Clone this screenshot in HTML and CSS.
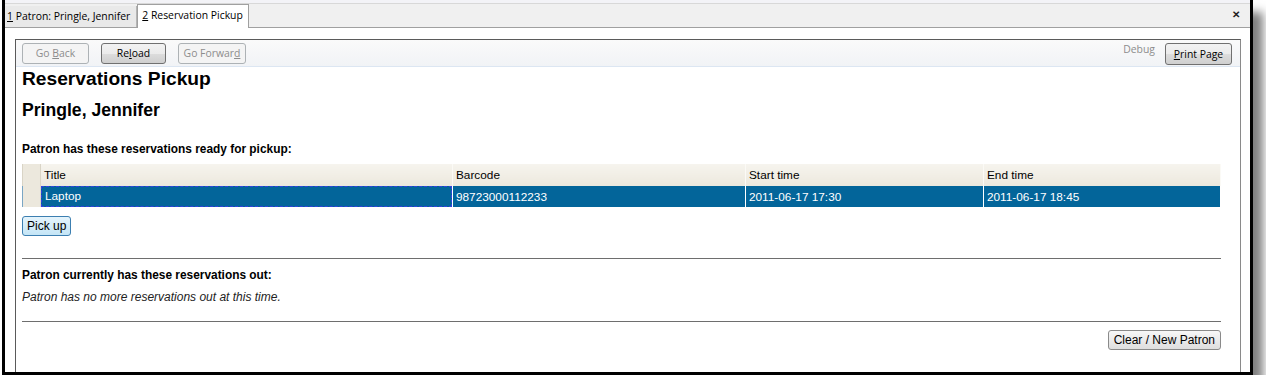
FILE: index.html
```html
<!DOCTYPE html>
<html>
<head>
    <meta charset="UTF-8">
    <title>Reservation Pickup</title>
    <link rel="stylesheet" href="styles.css">
</head>
<body>
    <div class="window">
        <div class="tab-strip">
            <div class="tab"><u>1</u> Patron: Pringle, Jennifer</div>
            <div class="tab selected"><u>2</u> Reservation Pickup</div>
            <div class="tab-spacer"></div>
            <div class="tab-close">&#x2715;</div>
        </div>
        <div class="panel">
            <div class="browser">
                <div class="toolbar">
                    <button class="nav-btn back" disabled>Go <u>B</u>ack</button>
                    <button class="nav-btn reload">Re<u>l</u>oad</button>
                    <button class="nav-btn forward" disabled>Go Forwar<u>d</u></button>
                    <div class="toolbar-spacer"></div>
                    <span class="debug">Debug</span>
                    <button class="nav-btn print"><u>P</u>rint Page</button>
                </div>
                <div class="page">
                    <h1>Reservations Pickup</h1>
                    <h2>Pringle, Jennifer</h2>
                    <div class="section-label">Patron has these reservations ready for pickup:</div>
                    <table class="grid">
                        <tr class="grid-head">
                            <td class="handle"></td>
                            <td class="col-title">Title</td>
                            <td class="col-barcode">Barcode</td>
                            <td class="col-start">Start time</td>
                            <td class="col-end">End time</td>
                        </tr>
                        <tr class="grid-row selected">
                            <td class="handle"></td>
                            <td class="focused"><div class="focus-box">Laptop</div></td>
                            <td>98723000112233</td>
                            <td>2011-06-17 17:30</td>
                            <td>2011-06-17 18:45</td>
                        </tr>
                    </table>
                    <button class="pick-up">Pick up</button>
                    <hr>
                    <div class="section-label">Patron currently has these reservations out:</div>
                    <div class="note">Patron has no more reservations out at this time.</div>
                    <hr>
                    <div class="actions">
                        <button class="plain-btn">Clear / New Patron</button>
                    </div>
                </div>
            </div>
        </div>
    </div>
</body>
</html>
```

FILE: styles.css
```css
body {
    margin: 0;
    padding: 0;
    background: #fff;
    overflow: hidden;
}

.window {
    margin-left: 2px;
    width: 1245px;
    height: 372px;
    border: 3px solid #000;
    border-top: none;
    background: #f3f3f7;
    box-shadow: 10px 12px 9px rgba(0,0,0,0.5);
    display: flex;
    flex-direction: column;
    font-family: "Open Sans", sans-serif;
    font-size: 10.4px;
}

.tab-strip {
    height: 23px;
    margin-top: 3px;
    border-top: 1px solid #d8d8d8;
    border-bottom: 1px solid #a0a0a0;
    background: #f0f0f0;
    display: flex;
    align-items: flex-end;
}

.tab {
    height: 21px;
    padding: 0 6px 0 2px;
    line-height: 20px;
    color: #000;
    border-right: 1px solid #b4b4b4;
    background: #e9e9e9;
    white-space: nowrap;
}

.tab.selected {
    height: 23px;
    margin-bottom: -1px;
    padding: 0 5px 0 4px;
    background: #fff;
    border: 1px solid #a0a0a0;
    border-bottom: none;
    line-height: 20px;
}

.tab-spacer {
    flex: 1;
}

.tab-close {
    align-self: center;
    margin-right: 10px;
    margin-top: -3px;
    font-size: 10px;
    font-weight: bold;
    color: #222;
}

.panel {
    flex: 1;
    padding: 11px 9px 0 10px;
    display: flex;
    background: #fff;
}

.browser {
    flex: 1;
    border: 1px solid #5a5a5a;
    border-bottom: none;
    border-right-color: #8a8a8a;
    display: flex;
    flex-direction: column;
}

.toolbar {
    height: 26px;
    display: flex;
    align-items: center;
    gap: 12px;
    padding: 0 6px;
    background: linear-gradient(#fafafa, #f1f3f6);
    border-bottom: 1px solid #dce6f2;
}

.toolbar-spacer {
    flex: 1;
}

.nav-btn {
    height: 21px;
    padding: 0;
    font-family: "Open Sans", sans-serif;
    font-size: 10.4px;
    color: #000;
    border: 1px solid #707070;
    border-radius: 3px;
    background: linear-gradient(#f2f2f2 0%, #ebebeb 50%, #dddddd 51%, #cfcfcf 100%);
}

.nav-btn.back {
    width: 67px;
}

.nav-btn.reload {
    width: 65px;
}

.nav-btn.forward {
    width: 68px;
}

.nav-btn[disabled] {
    color: #8d8d8d;
    border-color: #adb2b5;
    background: #f4f4f4;
}

.debug {
    color: #8d8d8d;
    margin-top: -9px;
    margin-right: -2px;
}

.nav-btn.print {
    width: 67px;
    height: 22px;
    margin-top: 2px;
    margin-right: 2px;
}

.page {
    padding: 1px 19px 0 6px;
    font-family: "Liberation Sans", Arial, sans-serif;
    font-size: 12px;
    color: #000;
}

h1 {
    font-size: 19.2px;
    margin: 0 0 11px 0;
    line-height: 21px;
}

h2 {
    font-size: 17.6px;
    margin: 0 0 21px 0;
    line-height: 20px;
}

.section-label {
    font-weight: bold;
    font-size: 11.9px;
    line-height: 16px;
    margin-bottom: 7px;
}

.grid {
    width: 100%;
    border-collapse: collapse;
    font-size: 11.8px;
}

.grid td {
    height: 22px;
    padding: 0 3px;
    border: 1px solid #fff;
    border-top: none;
    border-bottom: none;
}

.grid-row td {
    height: 21px;
}

.grid-head td {
    background: linear-gradient(#f6f4ee, #ece8dd);
    border-left-color: #d9d4c6;
    border-right-color: #fbfaf6;
}

.grid td.handle {
    width: 11px;
    background: #ece8dd;
    border-right: 1px solid #d9d4c6;
}

.grid-row.selected td {
    background: #03659a;
    color: #fff;
    border-left-color: #7aa6c4;
}

.grid-row.selected td.handle {
    background: #ece8dd;
}

.grid-row.selected td.focused {
    padding: 0;
}

.focus-box {
    height: 19px;
    line-height: 19px;
    padding: 0 3px;
    border: 1px dashed #3340e0;
}

.col-title {
    width: 405px;
}

.col-barcode {
    width: 286px;
}

.col-start {
    width: 231px;
}

.pick-up {
    margin-top: 9px;
    height: 20px;
    padding: 0 4px;
    font-family: "Liberation Sans", Arial, sans-serif;
    font-size: 12px;
    color: #000;
    border: 1px solid #3c7fb1;
    border-radius: 3px;
    background: linear-gradient(#e5f4fc, #c4e5f6);
}

hr {
    margin: 22px 0 8px 0;
    border: none;
    border-top: 1px solid #6e6e6e;
}

.note {
    font-style: italic;
    color: #222;
    margin-top: 1px;
}

.note + hr {
    margin-top: 17px;
}

.actions {
    display: flex;
    justify-content: flex-end;
}

.plain-btn {
    height: 20px;
    padding: 0 5px;
    font-family: "Liberation Sans", Arial, sans-serif;
    font-size: 12px;
    color: #000;
    border: 1px solid #8a8a8a;
    border-radius: 3px;
    background: linear-gradient(#f7f7f7, #dedede);
}
```
